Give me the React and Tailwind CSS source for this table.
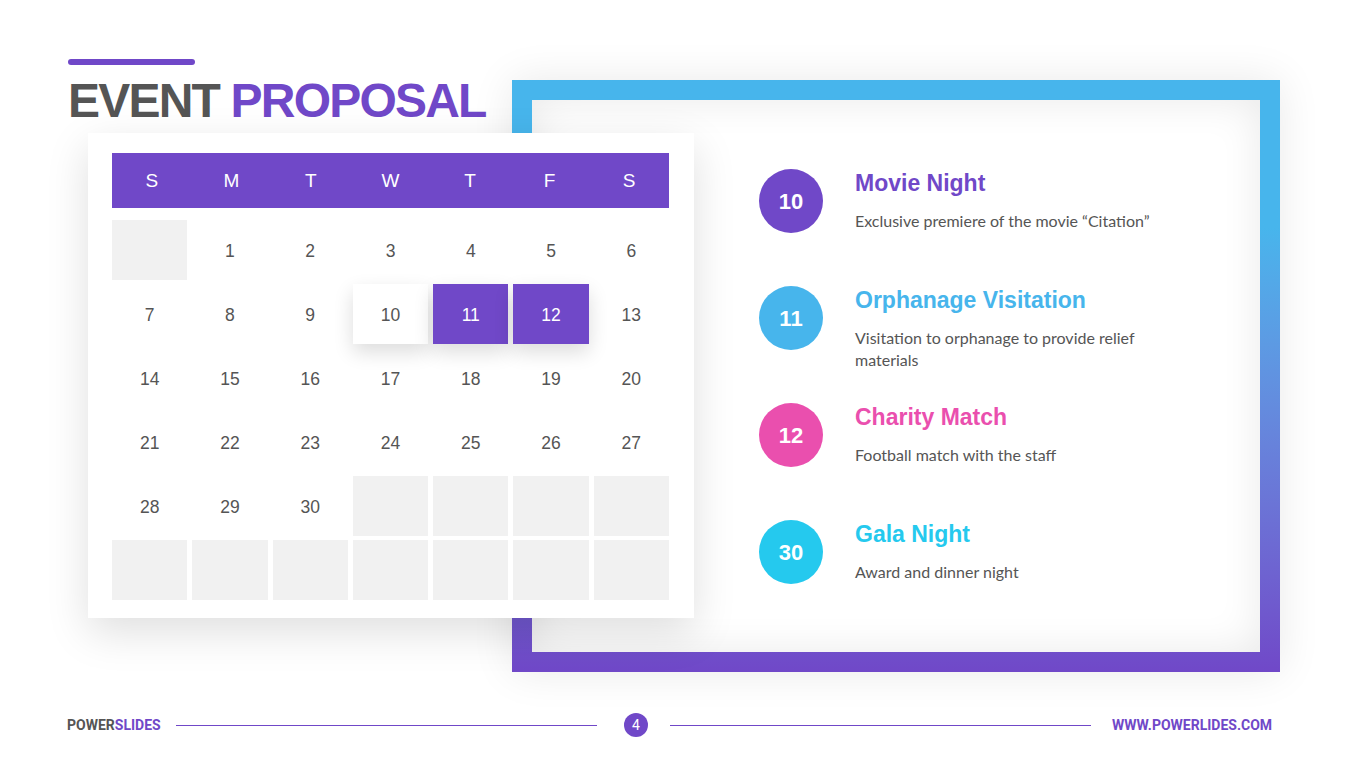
const events = [
  { day: "10", title: "Movie Night", text: "Exclusive premiere of the movie \u201cCitation\u201d", color: "bg-[#7048c8]", tone: "text-[#7048c8]" },
  { day: "11", title: "Orphanage Visitation", text: "Visitation to orphanage to provide relief materials", color: "bg-[#47b5ec]", tone: "text-[#47b5ec]" },
  { day: "12", title: "Charity Match", text: "Football match with the staff", color: "bg-[#ea4fae]", tone: "text-[#ea4fae]" },
  { day: "30", title: "Gala Night", text: "Award and dinner night", color: "bg-[#25c9ee]", tone: "text-[#25c9ee]" },
];

function buildCells() {
  const cells = [{ blank: true }];
  for (let i = 1; i <= 30; i++) cells.push({ day: i });
  while (cells.length < 42) cells.push({ blank: true });
  return cells;
}

function Calendar() {
  const cells = buildCells();
  return (
    <div className="relative z-10 ml-[20px] mt-[8px] w-[606px] bg-white pl-[24px] pr-[25px] pt-[20px] pb-[18px] shadow-[0_14px_40px_rgba(0,0,0,0.13)]">
      <div className="grid h-[55px] grid-cols-7 items-center bg-[#7048c8] pt-[2px] text-center text-[19px] text-white">
        {["S", "M", "T", "W", "T", "F", "S"].map((d, i) => (
          <div key={i}>{d}</div>
        ))}
      </div>
      <div className="mt-[12px] grid grid-cols-7 gap-x-[5px] gap-y-[4px]">
        {cells.map((c, i) => {
          if (c.blank) return <div key={i} className="h-[60px] bg-[#f1f1f1]" />;
          const picked = c.day === 11 || c.day === 12;
          const first = c.day === 10;
          return (
            <div
              key={i}
              className={`flex h-[60px] items-center justify-center pt-[3px] text-[17.5px] ${
                picked
                  ? "bg-[#7048c8] text-white shadow-[0_8px_20px_rgba(0,0,0,0.14)]"
                  : first
                    ? "bg-white text-[#555] shadow-[0_8px_20px_rgba(0,0,0,0.14)]"
                    : "text-[#555]"
              }`}
            >
              {c.day}
            </div>
          );
        })}
      </div>
    </div>
  );
}

function EventRow({ ev }) {
  return (
    <div className="flex h-[117px] items-start">
      <div className={`flex h-[64px] w-[64px] shrink-0 items-center justify-center rounded-full text-[22px] font-bold text-white ${ev.color}`}>
        {ev.day}
      </div>
      <div className="ml-[32px]">
        <div className={`text-[23px] font-bold leading-[28px] ${ev.tone}`}>{ev.title}</div>
        <p className="mt-[13px] w-[300px] font-['Lato',sans-serif] text-[16px] leading-[22px] text-[#555]">{ev.text}</p>
      </div>
    </div>
  );
}

export default function App() {
  return (
    <div className="flex h-[767px] w-[1365px] flex-col overflow-hidden bg-white font-['Liberation_Sans',Arial,sans-serif]">
      <div className="flex h-[700px] pl-[68px]">
        <div className="w-[444px] shrink-0 pt-[59px]">
          <div className="h-[6px] w-[127px] rounded-full bg-[#7048c8]" />
          <h1 className="mt-[12px] whitespace-nowrap text-[48px] font-bold leading-[48px] tracking-[-1.8px]">
            <span className="text-[#555]">EVENT </span>
            <span className="text-[#7048c8]">PROPOSAL</span>
          </h1>
          <Calendar />
        </div>
        <div className="mt-[80px] h-[592px] w-[768px] shrink-0 bg-linear-to-b from-[#47b5ec] from-25% to-[#7048c8] p-[20px] shadow-[0_0_40px_rgba(0,0,0,0.09)]">
          <div className="h-full w-full bg-white pl-[227px] pt-[69px] shadow-[inset_0_0_40px_rgba(0,0,0,0.09)]">
            {events.map((ev) => (
              <EventRow key={ev.day} ev={ev} />
            ))}
          </div>
        </div>
      </div>
      <div className="flex h-[50px] items-center pl-[67px] font-['Roboto',sans-serif] text-[14px] font-bold">
        <div className="w-[94px] whitespace-nowrap">
          <span className="text-[#555]">POWER</span>
          <span className="text-[#7048c8]">SLIDES</span>
        </div>
        <div className="ml-[15px] h-px w-[421px] bg-[#7048c8]" />
        <div className="ml-[27px] flex h-[24px] w-[24px] items-center justify-center rounded-full bg-[#7048c8] text-[14px] font-normal text-white">
          4
        </div>
        <div className="ml-[22px] h-px w-[421px] bg-[#7048c8]" />
        <div className="ml-[21px] whitespace-nowrap text-[#7048c8]">WWW.POWERLIDES.COM</div>
      </div>
    </div>
  );
}
